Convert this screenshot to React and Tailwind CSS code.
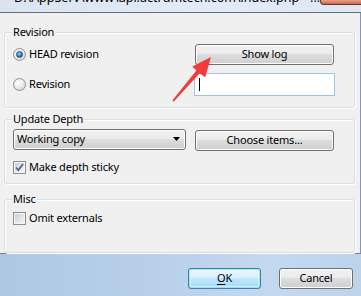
import React from "react";

const font = { fontFamily: '"Noto Sans", "Open Sans", sans-serif' };
const T = "text-[11px] tracking-[-0.2px] text-black";

function Btn({ children, className = "", def = false }) {
  return (
    <div
      className={
        "flex items-center justify-center rounded-[3px] border " +
        T +
        " " +
        (def
          ? "border-[#3c7fb1] bg-[linear-gradient(#eaf6fd_0%,#d9f0fc_45%,#bee6fd_50%,#a7d9f5_100%)] shadow-[inset_0_0_0_1px_#48d1ff80,inset_0_0_0_2px_#ffffff80] "
          : "border-[#707070] bg-[linear-gradient(#f2f2f2_0%,#ebebeb_45%,#dddddd_50%,#cfcfcf_100%)] shadow-[inset_0_0_0_1px_#fcfcfc] ") +
        className
      }
    >
      {children}
    </div>
  );
}

function Radio({ checked }) {
  return (
    <div className="flex h-[13px] w-[13px] shrink-0 items-center justify-center rounded-full border border-[#8e8f8f] bg-[radial-gradient(circle_at_40%_35%,#ffffff,#e5e5e5_60%,#d0d0d0)]">
      {checked && (
        <div className="h-[7px] w-[7px] rounded-full border border-[#1b4d7a] bg-[radial-gradient(circle_at_40%_35%,#96d4f5,#2f83c4_55%,#0b3f73)]" />
      )}
    </div>
  );
}

function Check({ checked }) {
  return (
    <div className="flex h-[13px] w-[13px] shrink-0 items-center justify-center border border-[#8e8f8f] bg-white">
      <div className="flex h-[11px] w-[11px] items-center justify-center border border-[#f4f4f4] bg-[linear-gradient(135deg,#cbcfd5,#f6f6f6)]">
        {checked && (
          <svg width="9" height="9" viewBox="0 0 9 9">
            <path d="M1 4.5 L3.4 7.2 L8 1" fill="none" stroke="#4a5f97" strokeWidth="1.7" />
          </svg>
        )}
      </div>
    </div>
  );
}

function Group({ label, className = "", children }) {
  return (
    <div
      className={
        "relative rounded-[3px] border border-[#d5dfe5] shadow-[inset_1px_1px_0_#ffffff,1px_1px_0_#ffffff] " +
        className
      }
    >
      <span className={"absolute left-[7px] top-[-9px] bg-[#f0f0f0] px-[1px] leading-[16px] " + T}>
        {label}
      </span>
      {children}
    </div>
  );
}

export default function App() {
  return (
    <div
      className="relative flex h-[296px] w-[361px] flex-col overflow-hidden bg-[#f0f0f0]"
      style={font}
    >
      {/* title bar */}
      <div className="flex h-[12px] items-start overflow-hidden bg-[linear-gradient(90deg,#d9e4f0,#e3ecf6_60%,#dde7f2)]">
        <div className="ml-[14px] mt-[-10px] whitespace-nowrap text-[12.5px] leading-[16px] text-black">
          D:\AppServ\www\api.actrumtech.com\index.php
        </div>
        <div className="ml-[11px] mt-[-10px] text-[12.5px] leading-[16px] text-[#1a1a1a]">...</div>
        <div className="ml-auto h-[5px] w-[43px] rounded-bl-[4px] border-b border-l border-[#6a3526] bg-[linear-gradient(#e8a58e,#c9654b)]" />
      </div>
      <div className="h-[1px] bg-[#5e6f80]" />

      {/* body */}
      <div className="flex flex-1 flex-col border-r border-[#8597a8] pl-[4px] pr-[5px] pt-[19px]">
        <Group label="Revision" className="pb-[11px] pl-[8px] pt-[11px]">
          <div className="flex h-[21px] items-center">
            <div className="flex w-[182px] items-center gap-[3px]">
              <Radio checked />
              <span className={T}>HEAD revision</span>
            </div>
            <Btn className="h-[21px] w-[139px]">Show log</Btn>
          </div>
          <div className="mt-[8px] flex h-[23px] items-center">
            <div className="flex w-[181px] items-center gap-[3px]">
              <Radio />
              <span className={T}>Revision</span>
            </div>
            <div className="flex h-[23px] w-[141px] items-center border border-[#9dc4e4] bg-white pl-[4px]">
              <div className="h-[13px] w-[1px] bg-black" />
            </div>
          </div>
        </Group>

        <Group label="Update Depth" className="mt-[11px] pb-[9px] pl-[8px] pt-[9px]">
          <div className="flex items-start">
            <div className="mr-[9px] flex h-[21px] w-[173px] items-center justify-between rounded-[3px] border border-[#707070] bg-[linear-gradient(#f2f2f2_0%,#ebebeb_45%,#dddddd_50%,#cfcfcf_100%)] pl-[3px] pr-[5px] shadow-[inset_0_0_0_1px_#fcfcfc]">
              <span className={T}>Working copy</span>
              <svg width="7" height="4" viewBox="0 0 7 4">
                <path d="M0 0 H7 L3.5 4 Z" fill="#000" />
              </svg>
            </div>
            <Btn className="mt-[1px] h-[21px] w-[139px]">Choose items...</Btn>
          </div>
          <div className="mt-[10px] flex h-[13px] items-center gap-[3px]">
            <Check checked />
            <span className={T}>Make depth sticky</span>
          </div>
        </Group>

        <Group label="Misc" className="mt-[15px] pb-[27px] pl-[8px] pt-[12px]">
          <div className="flex h-[13px] items-center gap-[3px]">
            <Check />
            <span className={T}>Omit externals</span>
          </div>
        </Group>
      </div>

      {/* bottom bar */}
      <div className="flex h-[44px] items-start justify-end gap-[18px] border-t border-[#70829a] bg-[linear-gradient(90deg,#aec8e4,#b7cfe9_40%,#c3d9ef_75%,#bcd3ea)] pr-[8px] pt-[14px]">
        <Btn def className="h-[21px] w-[73px]">
          <span>
            <span className="underline underline-offset-2">O</span>K
          </span>
        </Btn>
        <Btn className="h-[21px] w-[74px]">Cancel</Btn>
      </div>

      {/* red annotation arrow */}
      <svg className="pointer-events-none absolute left-0 top-0" width="361" height="296" viewBox="0 0 361 296">
        <polygon
          points="172.3,100.6 196.4,70.6 192.3,66.4 211,57 205.3,77.3 199.6,73.4 173.8,101.4"
          fill="#f23b3b"
        />
      </svg>
    </div>
  );
}
